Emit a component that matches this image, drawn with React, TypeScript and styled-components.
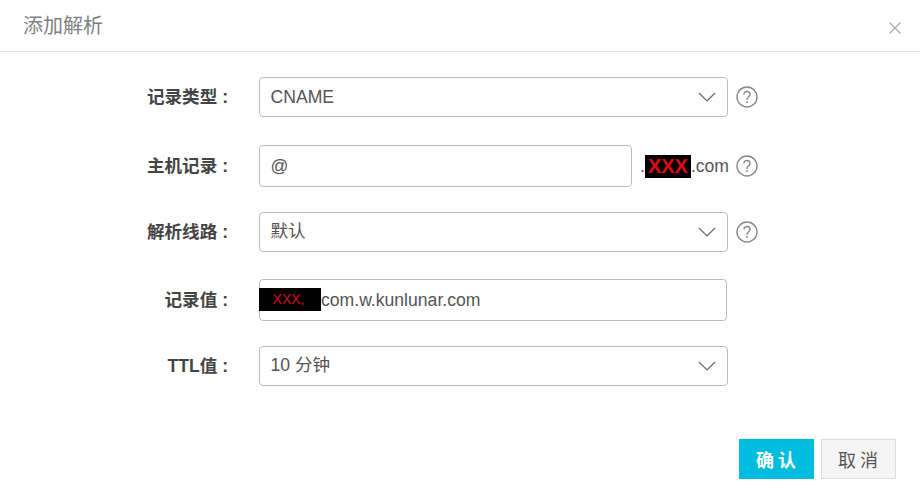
import React from "react";
import styled, { createGlobalStyle } from "styled-components";

const Global = createGlobalStyle`
  html, body { margin: 0; padding: 0; background: #fff; }
  body { font-family: "Liberation Sans", "Noto Sans CJK SC", sans-serif; color: #555; }
`;

const Dialog = styled.div`
  width: 920px;
  height: 496px;
  display: flex;
  flex-direction: column;
  background: #fff;
`;

const Header = styled.header`
  height: 51px;
  border-bottom: 1px solid #ddd;
  display: flex;
  align-items: center;
  justify-content: space-between;
  padding: 0 18px 0 23px;
  box-sizing: content-box;
`;

const Title = styled.h1`
  margin: 0;
  font-size: 20px;
  font-weight: 400;
  color: #808080;
  line-height: 52px;
`;

const Close = styled.svg`
  width: 14px;
  height: 14px;
  margin-top: 4px;
  stroke: #aaa;
  fill: none;
`;

const Form = styled.div`
  display: flex;
  flex-direction: column;
  padding-top: 25px;
`;

const Row = styled.div<{ $mt?: number }>`
  display: flex;
  align-items: center;
  margin-top: ${(p) => p.$mt ?? 0}px;
`;

const Label = styled.label`
  width: 228px;
  flex: none;
  text-align: right;
  font-size: 17.6px;
  line-height: 24px;
  font-weight: 700;
  color: #444;
  white-space: pre;
  margin-top: 0;
`;

const Control = styled.div<{ $w: number; $h: number }>`
  box-sizing: border-box;
  margin-left: 31px;
  width: ${(p) => p.$w}px;
  height: ${(p) => p.$h}px;
  border: 1px solid #bbb;
  border-radius: 4px;
  padding-left: 11px;
  display: flex;
  align-items: center;
  justify-content: space-between;
  font-size: 17.6px;
  line-height: 24px;
  color: #555;
`;

const ControlText = styled.span<{ $latin?: boolean }>`
  margin-top: ${(p) => (p.$latin ? 0 : -2)}px;
  margin-left: -0.5px;
`;

const Chevron = styled.svg`
  width: 18px;
  height: 10px;
  margin-right: 11px;
  stroke: #666;
  fill: none;
`;

const Help = styled.svg<{ $ml: number }>`
  width: 22px;
  height: 22px;
  margin-left: ${(p) => p.$ml}px;
  flex: none;
`;

const Suffix = styled.span`
  margin-left: 8px;
  font-size: 17.6px;
  color: #555;
  display: flex;
  align-items: center;
  white-space: pre;
`;

const RedactBig = styled.span`
  background: #000;
  color: #e00b12;
  width: 46px;
  height: 23px;
  font-size: 20px;
  line-height: 23px;
  text-align: center;
  font-weight: 700;
`;

const ValueText = styled.span`
  display: flex;
  align-items: center;
  margin-left: -12px;
  margin-top: -1px;
`;

const RedactSmall = styled.span`
  background: #000;
  color: #d80c12;
  width: 62px;
  height: 23px;
  font-size: 14px;
  line-height: 23px;
  text-align: center;
  padding-right: 3px;
  box-sizing: border-box;
`;

const Footer = styled.footer`
  display: flex;
  justify-content: flex-end;
  gap: 7px;
  padding: 53px 24px 0 0;
`;

const Button = styled.button<{ $primary?: boolean }>`
  width: 75px;
  height: 40px;
  box-sizing: border-box;
  border: 1px solid ${(p) => (p.$primary ? "#00bcde" : "#ddd")};
  background: ${(p) => (p.$primary ? "#00bcde" : "#f5f5f5")};
  color: ${(p) => (p.$primary ? "#fff" : "#555")};
  font-family: inherit;
  font-size: 18px;
  font-weight: ${(p) => (p.$primary ? 700 : 400)};
  letter-spacing: 4px;
  padding: 0 0 0 3px;
`;

const HelpIcon = ({ ml }: { ml: number }) => (
  <Help $ml={ml} viewBox="0 0 22 22">
    <circle cx="11" cy="11" r="10" fill="none" stroke="#888" strokeWidth="1.4" />
    <path
      d="M7.9 8.6c0-1.9 1.3-3.1 3.1-3.1s3.1 1.1 3.1 2.8c0 1.3-.7 2-1.7 2.7-1 .7-1.4 1.2-1.4 2.4v.6"
      fill="none"
      stroke="#888"
      strokeWidth="1.4"
    />
    <rect x="10.2" y="15.2" width="1.6" height="1.7" fill="#888" />
  </Help>
);

const Arrow = () => (
  <Chevron viewBox="0 0 18 10">
    <path d="M1 1l8 8 8-8" strokeWidth="1.2" />
  </Chevron>
);

export default function App() {
  return (
    <Dialog>
      <Global />
      <Header>
        <Title>添加解析</Title>
        <Close viewBox="0 0 14 14">
          <path d="M1.5 1.5l11 11M12.5 1.5l-11 11" strokeWidth="1.2" />
        </Close>
      </Header>
      <Form>
        <Row>
          <Label>记录类型 :</Label>
          <Control $w={469} $h={40}>
            <ControlText $latin>CNAME</ControlText>
            <Arrow />
          </Control>
          <HelpIcon ml={8} />
        </Row>
        <Row $mt={28}>
          <Label>主机记录 :</Label>
          <Control $w={373} $h={42}><ControlText $latin>@</ControlText></Control>
          <Suffix>.<RedactBig>XXX</RedactBig>.com</Suffix>
          <HelpIcon ml={7} />
        </Row>
        <Row $mt={25}>
          <Label>解析线路 :</Label>
          <Control $w={469} $h={40}>
            <ControlText>默认</ControlText>
            <Arrow />
          </Control>
          <HelpIcon ml={8} />
        </Row>
        <Row $mt={27}>
          <Label>记录值 :</Label>
          <Control $w={468} $h={42}>
            <ValueText>
              <RedactSmall>XXX,</RedactSmall>com.w.kunlunar.com
            </ValueText>
          </Control>
        </Row>
        <Row $mt={25}>
          <Label>TTL值 :</Label>
          <Control $w={469} $h={40}>
            <ControlText>10 分钟</ControlText>
            <Arrow />
          </Control>
        </Row>
      </Form>
      <Footer>
        <Button $primary>确认</Button>
        <Button>取消</Button>
      </Footer>
    </Dialog>
  );
}
